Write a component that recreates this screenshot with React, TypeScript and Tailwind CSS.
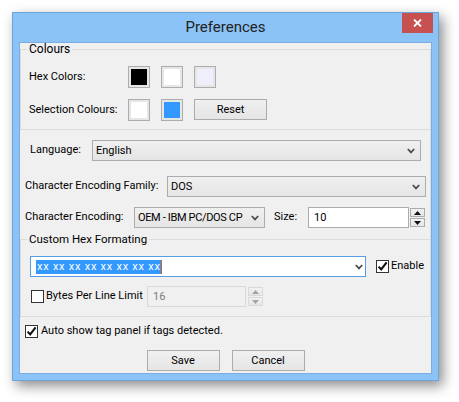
import React from "react";

const font = { fontFamily: 'Roboto, "Liberation Sans", sans-serif' };

function Chevron({ color = "#4a4a4a" }: { color?: string }) {
  return (
    <svg width="8" height="6" viewBox="0 0 8 6" className="shrink-0">
      <path d="M0.8 1 L4 4.4 L7.2 1" fill="none" stroke={color} strokeWidth="1.7" />
    </svg>
  );
}

function Combo({ text, className, textClass = "" }: { text: string; className: string; textClass?: string }) {
  return (
    <div
      className={`flex items-center gap-[3px] h-[21px] shrink-0 border border-[#acacac] bg-gradient-to-b from-[#f0f0f0] to-[#e5e5e5] pl-[3px] pr-[5px] ${className}`}
    >
      <span className={`flex-1 overflow-hidden whitespace-nowrap leading-[19px] ${textClass}`}>{text}</span>
      <Chevron />
    </div>
  );
}

function Swatch({ color }: { color: string }) {
  return (
    <div className="w-[22px] h-[22px] shrink-0 border border-[#adadad] bg-[#e6e6e6] p-[2px]">
      <div className="w-full h-full" style={{ background: color }} />
    </div>
  );
}

function Button({ label }: { label: string }) {
  return (
    <div className="w-[73px] h-[21px] shrink-0 border border-[#acacac] bg-gradient-to-b from-[#f0f0f0] to-[#e5e5e5] flex items-center justify-center leading-[19px]">
      {label}
    </div>
  );
}

function Check({ checked }: { checked: boolean }) {
  return (
    <div className="w-[13px] h-[13px] border border-[#333] bg-white shrink-0 flex items-center justify-center">
      {checked && (
        <svg width="11" height="11" viewBox="0 0 11 11">
          <path d="M1.6 5.6 L4.2 8.4 L9.6 1.4" fill="none" stroke="#111" strokeWidth="2.1" />
        </svg>
      )}
    </div>
  );
}

function Spinner({ disabled }: { disabled?: boolean }) {
  const border = disabled ? "border-[#d9d9d9]" : "border-[#acacac]";
  const fill = disabled ? "#a3a3a3" : "#111";
  return (
    <div className="flex flex-col justify-between h-[21px] py-[1px] w-[15px] shrink-0">
      <div className={`h-[9px] border ${border} bg-gradient-to-b from-[#f2f2f2] to-[#e6e6e6] flex items-center justify-center`}>
        <svg width="7" height="4" viewBox="0 0 7 4">
          <path d="M0 4 L3.5 0 L7 4 Z" fill={fill} />
        </svg>
      </div>
      <div className={`h-[9px] border ${border} bg-gradient-to-b from-[#f2f2f2] to-[#e6e6e6] flex items-center justify-center`}>
        <svg width="7" height="4" viewBox="0 0 7 4">
          <path d="M0 0 L3.5 4 L7 0 Z" fill={fill} />
        </svg>
      </div>
    </div>
  );
}

export default function App() {
  return (
    <div className="w-[459px] h-[402px] bg-white overflow-hidden pt-[12px] pl-[12px] text-[11px] text-black" style={font}>
      <div className="w-[427px] h-[369px] bg-[#8bc3f6] border border-[#6aa6dc] flex flex-col shadow-[4px_5px_12px_rgba(0,0,0,0.45)]">
        {/* title bar */}
        <div className="h-[29px] grid grid-cols-[1fr_auto_1fr] items-start shrink-0">
          <div />
          <div className="self-center text-[15px] leading-[20px] text-[#222] pb-[1px]">Preferences</div>
          <div className="justify-self-end mr-[5px] w-[31px] h-[20px] bg-[#c75050] flex items-center justify-center">
            <svg width="9" height="8" viewBox="0 0 9 8">
              <path d="M1 0.5 L8 7.5 M8 0.5 L1 7.5" stroke="#fff" strokeWidth="1.8" />
            </svg>
          </div>
        </div>

        {/* client area */}
        <div className="ml-[6px] w-[413px] h-[332px] border border-[#7aaee0] bg-[#f0f0f0] flex flex-col">
          {/* Colours */}
          <fieldset className="w-[411px] border border-[#dcdcdc] pb-[8px]">
            <legend className="ml-[6px] px-[2px] leading-[13px] text-[12px]">Colours</legend>
            <div className="flex items-center h-[22px] mt-[10px] pl-[8px]">
              <div className="w-[99px] shrink-0 whitespace-nowrap">Hex Colors:</div>
              <div className="flex gap-[11px]">
                <Swatch color="#000000" />
                <Swatch color="#ffffff" />
                <Swatch color="#efeffb" />
              </div>
            </div>
            <div className="flex items-start h-[22px] mt-[11px] pl-[8px]">
              <div className="w-[99px] shrink-0 whitespace-nowrap leading-[22px]">Selection Colours:</div>
              <div className="flex gap-[11px]">
                <Swatch color="#ffffff" />
                <Swatch color="#3399ff" />
                <Button label="Reset" />
              </div>
            </div>
          </fieldset>

          {/* Language / encoding */}
          <div className="w-[411px] h-[110px] border-r border-[#dcdcdc] flex flex-col">
            <div className="flex items-center mt-[10px] pl-[10px]">
              <div className="w-[62px] shrink-0 whitespace-nowrap">Language:</div>
              <Combo text="English" className="w-[329px]" />
            </div>
            <div className="flex items-center mt-[15px] pl-[5px]">
              <div className="w-[142px] shrink-0 whitespace-nowrap">Character Encoding Family:</div>
              <Combo text="DOS" className="w-[259px]" />
            </div>
            <div className="flex items-center mt-[10px] pl-[5px]">
              <div className="w-[109px] shrink-0 whitespace-nowrap">Character Encoding:</div>
              <Combo text="OEM - IBM PC/DOS CP" className="w-[131px]" textClass="tracking-[-0.35px]" />
              <div className="ml-[9px] w-[34px] shrink-0">Size:</div>
              <div className="w-[101px] h-[21px] shrink-0 border border-[#acacac] bg-white pl-[5px] leading-[19px]">10</div>
              <div className="ml-[1px]">
                <Spinner />
              </div>
            </div>
          </div>

          {/* Custom Hex Formating */}
          <fieldset className="w-[411px] mt-[-7px] border border-[#dcdcdc] pb-[9px]">
            <legend className="ml-[6px] px-[2px] leading-[13px] text-[11.5px]">Custom Hex Formating</legend>
            <div className="flex items-center mt-[10px] pl-[9px]">
              <div className="w-[336px] h-[21px] shrink-0 border border-[#569de5] bg-white flex items-center pl-[5px] pr-[2px]">
                <span className="bg-[#3399ff] text-white leading-[14px] whitespace-nowrap tracking-[0.75px] pl-[1px]">xx xx xx xx xx xx xx xx</span>
                <span className="w-[1px] h-[14px] bg-[#c8641e]" />
                <span className="flex-1" />
                <Chevron />
              </div>
              <div className="ml-[10px]">
                <Check checked />
              </div>
              <div className="ml-[2px] whitespace-nowrap">Enable</div>
            </div>
            <div className="flex items-center mt-[9px] pl-[10px]">
              <Check checked={false} />
              <div className="ml-[2px] w-[101px] shrink-0 whitespace-nowrap">Bytes Per Line Limit</div>
              <div className="w-[99px] h-[21px] shrink-0 border border-[#d9d9d9] bg-[#f0f0f0] pl-[5px] leading-[19px] text-[#7a7a7a]">16</div>
              <div className="ml-[2px]">
                <Spinner disabled />
              </div>
            </div>
          </fieldset>

          {/* auto show */}
          <div className="flex items-center mt-[6px] pl-[5px]">
            <Check checked />
            <div className="ml-[3px] whitespace-nowrap">Auto show tag panel if tags detected.</div>
          </div>

          {/* buttons */}
          <div className="flex justify-center gap-[12px] mt-[10px] w-[411px]">
            <Button label="Save" />
            <Button label="Cancel" />
          </div>
        </div>
      </div>
    </div>
  );
}
